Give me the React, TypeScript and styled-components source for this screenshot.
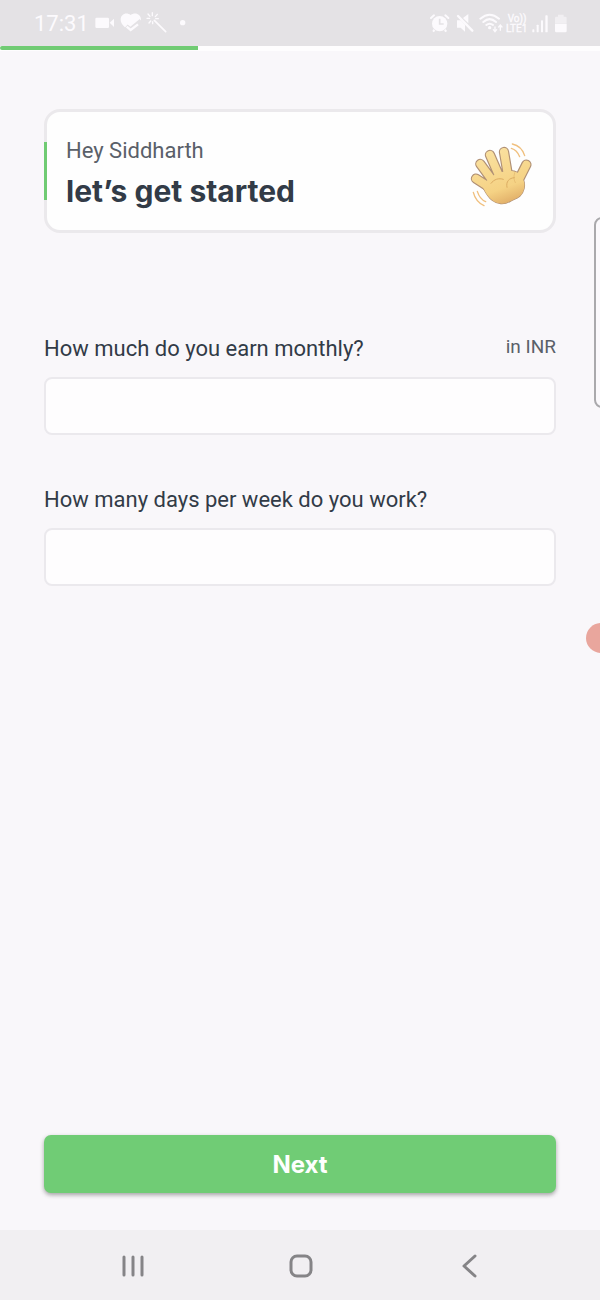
import React from "react";
import styled, { createGlobalStyle } from "styled-components";

const GlobalStyle = createGlobalStyle`
  * { box-sizing: border-box; }
  body {
    margin: 0;
    background: #f9f7fa;
    color: #323b47;
    font-family: Roboto, "Liberation Sans", sans-serif;
  }
`;

const Screen = styled.div`
  position: relative;
  display: flex;
  flex-direction: column;
  min-height: 100vh;
  overflow: hidden;
`;

const StatusBar = styled.header`
  display: flex;
  align-items: center;
  justify-content: space-between;
  height: 46px;
  padding: 2px 32px 0 34px;
  background: #e4e2e5;
  color: #fcfafd;
`;

const StatusGroup = styled.div`
  display: flex;
  align-items: center;
  gap: 5px;
`;

const Clock = styled.time`
  font-size: 22px;
  line-height: 24px;
`;

const StatusGlyphs = styled.svg`
  display: block;
  fill: none;
  stroke: none;
`;

const Progress = styled.div`
  height: 5px;
  background: #fefdfe;
`;

const ProgressFill = styled.div`
  width: 33%;
  height: 4px;
  border-radius: 2px 0 0 2px;
  background: #70cb73;
`;

const Content = styled.main`
  display: flex;
  flex: 1;
  flex-direction: column;
  padding: 58px 44px 37px;
`;

const GreetingCard = styled.section`
  position: relative;
  display: flex;
  align-items: center;
  justify-content: space-between;
  height: 124px;
  margin-bottom: 100px;
  padding: 6px 21px 0 19px;
  border: 3px solid #ebe9ec;
  border-radius: 16px;
  background: #fefefe;

  &::before {
    content: "";
    position: absolute;
    top: 30px;
    left: -3px;
    width: 3px;
    height: 58px;
    background: #70cb73;
  }
`;

const Greeting = styled.p`
  margin: 0;
  padding-top: 2px;
  color: #5a6069;
  font-size: 22px;
  line-height: 32px;
`;

const Title = styled.h1`
  margin: 0;
  font-family: Inter, sans-serif;
  font-size: 30px;
  font-weight: 700;
  line-height: 48px;
`;

const Form = styled.form`
  display: flex;
  flex: 1;
  flex-direction: column;
  gap: 49px;
`;

const Field = styled.div`
  display: flex;
  flex-direction: column;
  gap: 12px;
`;

const FieldHeader = styled.div`
  display: flex;
  align-items: flex-start;
  justify-content: space-between;
`;

const Label = styled.label`
  font-size: 22px;
  line-height: 32px;
`;

const Unit = styled.span`
  color: #5a6069;
  font-size: 19px;
  line-height: 28px;
`;

const TextBox = styled.input`
  width: 100%;
  height: 58px;
  padding: 0 16px;
  border: 2px solid #ebe9ed;
  border-radius: 8px;
  background: #fefdfe;
  color: inherit;
  font: inherit;
  font-size: 22px;
  outline: none;
`;

const NextButton = styled.button`
  width: 100%;
  height: 58px;
  margin-top: auto;
  border: 0;
  border-radius: 7px;
  background: #70cc75;
  box-shadow: 0 2px 4px rgba(60, 60, 60, 0.45);
  color: #fefffe;
  font-family: Inter, sans-serif;
  font-size: 24px;
  font-weight: 700;
  cursor: pointer;
`;

const NavBar = styled.nav`
  display: grid;
  grid-template-columns: repeat(3, 168px);
  justify-content: center;
  height: 70px;
  padding: 2px 0 0 2px;
  background: #f1eff2;
`;

const NavButton = styled.button`
  display: flex;
  align-items: center;
  justify-content: center;
  padding: 0;
  border: 0;
  background: none;
  cursor: pointer;
`;

const EdgePanel = styled.div`
  position: absolute;
  top: 217px;
  right: -12px;
  width: 18px;
  height: 191px;
  border: 2px solid #aaa9ac;
  border-radius: 8px;
  background: #fbf9fc;
`;

const EdgeBubble = styled.div`
  position: absolute;
  top: 623px;
  right: -16px;
  width: 30px;
  height: 30px;
  border-radius: 50%;
  background: #e9a69d;
`;

const LeftStatusIcons = () => (
  <StatusGlyphs width="94" height="26" viewBox="282 34 282 78" aria-hidden="true">
    <g fill="#fcfafd">
      <rect x="286" y="54" width="41" height="31" rx="4" />
      <path d="M329 69 L342 57 V82 Z" />
      <path d="M392 46 C379 36 362 43 362 60 C362 75 378 85 392 96 C406 85 423 75 423 60 C423 43 405 36 392 46 Z" />
      <circle cx="548" cy="69" r="8" />
    </g>
    <path stroke="#e4e2e5" strokeWidth="15" d="M378 80 L391 91 L424 64" />
    <path stroke="#fcfafd" strokeWidth="7" d="M380 81 L392 91 L414 74" />
    <g stroke="#fcfafd" strokeWidth="5" strokeLinecap="round">
      <path d="M463 62 L497 96" />
      <path
        strokeWidth="4"
        d="M457 39 V48 M444 43 L450 50 M441 56 H449 M447 70 L452 64 M458 66 V72 M466 51 L472 44 M467 57 H475"
      />
    </g>
  </StatusGlyphs>
);

const RightStatusIcons = () => (
  <StatusGlyphs width="138" height="26" viewBox="30 32 414 78" aria-hidden="true">
    <g fill="#fcfafd">
      <circle cx="59" cy="70" r="23" />
      <path d="M41 86 L46 91 L41 96 L37 92 Z M77 86 L81 92 L77 96 L72 91 Z" />
      <path d="M111 60 H122 L135 73 V94 L122 82 H111 Z" />
      <path d="M129 53 L145 41 V69 Z" />
      <circle cx="209" cy="82" r="5" />
      <rect x="337" y="87" width="6" height="9" rx="2" />
      <rect x="350" y="73" width="6" height="23" rx="2" />
      <rect x="363" y="60" width="6" height="36" rx="2" />
      <rect x="376" y="45" width="7" height="51" rx="2" />
      <path d="M405 71 H440 V92 Q440 96 436 96 H409 Q405 96 405 92 Z" />
      <path fill="#f1eff2" d="M405 70 V53 Q405 49 409 49 H414 V43 H431 V49 H436 Q440 49 440 53 V70 Z" />
    </g>
    <path stroke="#e4e2e5" strokeWidth="5" d="M59 55 V71 H71" />
    <g stroke="#fcfafd" strokeWidth="6" strokeLinecap="round">
      <path d="M33 53 L42 45 M76 45 L85 53" />
      <path d="M114 47 L157 91" strokeWidth="7" />
      <path d="M181 55 Q209 31 237 55 M190 65 Q209 48 228 65 M199 74 Q209 66 219 74" />
      <path strokeWidth="4" d="M225 80 V93 M220 88 L225 94 L230 88 M241 90 V76 M236 80 L241 74 L246 80" />
    </g>
    <g
      fill="#fcfafd"
      stroke="#fcfafd"
      strokeWidth="1"
      fontFamily="Roboto, sans-serif"
      fontSize="30"
    >
      <text x="263" y="66">Vo))</text>
      <text x="258" y="95">LTE1</text>
    </g>
  </StatusGlyphs>
);

const handFingers =
  "M78 233 L128 265 M91 189 L134 248 M120 162 L154 240 M162 153 L176 235 M229 191 L203 243";
const handPalm =
  "M108 243 C125 216 180 201 203 215 C217 230 227 240 222 263 C216 290 194 293 180 301 C162 312 141 309 127 298 C112 286 104 268 98 257 Z";

const WavingHand = () => (
  <svg width="62" height="65" viewBox="60 123 186 195" fill="none" role="img" aria-label="Waving hand">
    <defs>
      <linearGradient id="skin" x1="120" y1="145" x2="180" y2="310" gradientUnits="userSpaceOnUse">
        <stop offset="0" stopColor="#fae1a0" />
        <stop offset="0.7" stopColor="#f5d284" />
        <stop offset="1" stopColor="#dfab65" />
      </linearGradient>
    </defs>
    <g stroke="#b09075" strokeLinecap="round" strokeLinejoin="round">
      <path d={handFingers} strokeWidth="31" />
      <path d={handPalm} strokeWidth="4" />
    </g>
    <g stroke="url(#skin)" strokeLinecap="round">
      <path d={handFingers} strokeWidth="24" />
    </g>
    <path d={handPalm} fill="url(#skin)" />
    <g stroke="#dcac62" strokeWidth="3" strokeLinecap="round">
      <path d="M171 259 C167 242 177 231 193 230" />
      <path d="M123 247 C132 235 146 230 160 235" />
      <path d="M194 215 C190 228 192 238 196 245" opacity="0.5" />
    </g>
    <g stroke="#f0bf7d" strokeWidth="4" strokeLinecap="round">
      <path d="M187 129 Q215 135 224 164 M184 142 Q201 147 209 167" />
      <path d="M70 274 Q77 302 102 314 M82 271 Q89 294 107 302" />
    </g>
  </svg>
);

export default function App() {
  return (
    <>
      <GlobalStyle />
      <Screen>
        <StatusBar>
          <StatusGroup>
            <Clock>17:31</Clock>
            <LeftStatusIcons />
          </StatusGroup>
          <RightStatusIcons />
        </StatusBar>
        <Progress role="progressbar" aria-label="Setup progress" aria-valuenow={33}>
          <ProgressFill />
        </Progress>
        <Content>
          <GreetingCard>
            <div>
              <Greeting>Hey Siddharth</Greeting>
              <Title>let’s get started</Title>
            </div>
            <WavingHand />
          </GreetingCard>
          <Form onSubmit={(event) => event.preventDefault()}>
            <Field>
              <FieldHeader>
                <Label htmlFor="income">How much do you earn monthly?</Label>
                <Unit>in INR</Unit>
              </FieldHeader>
              <TextBox id="income" inputMode="numeric" />
            </Field>
            <Field>
              <FieldHeader>
                <Label htmlFor="days">How many days per week do you work?</Label>
              </FieldHeader>
              <TextBox id="days" inputMode="numeric" />
            </Field>
            <NextButton type="submit">Next</NextButton>
          </Form>
        </Content>
        <NavBar>
          <NavButton aria-label="Recent apps">
            <svg width="24" height="24" fill="none" stroke="#858487" strokeWidth="3" strokeLinecap="round">
              <path d="M3 3 V21 M12 3 V21 M21 3 V21" />
            </svg>
          </NavButton>
          <NavButton aria-label="Home">
            <svg width="24" height="24" fill="none" stroke="#858487" strokeWidth="3">
              <rect x="2" y="2" width="20" height="20" rx="6" />
            </svg>
          </NavButton>
          <NavButton aria-label="Back">
            <svg width="24" height="24" fill="none" stroke="#858487" strokeWidth="3" strokeLinecap="round" strokeLinejoin="round">
              <path d="M18 2 L7 12 L18 22" />
            </svg>
          </NavButton>
        </NavBar>
        <EdgePanel />
        <EdgeBubble />
      </Screen>
    </>
  );
}
